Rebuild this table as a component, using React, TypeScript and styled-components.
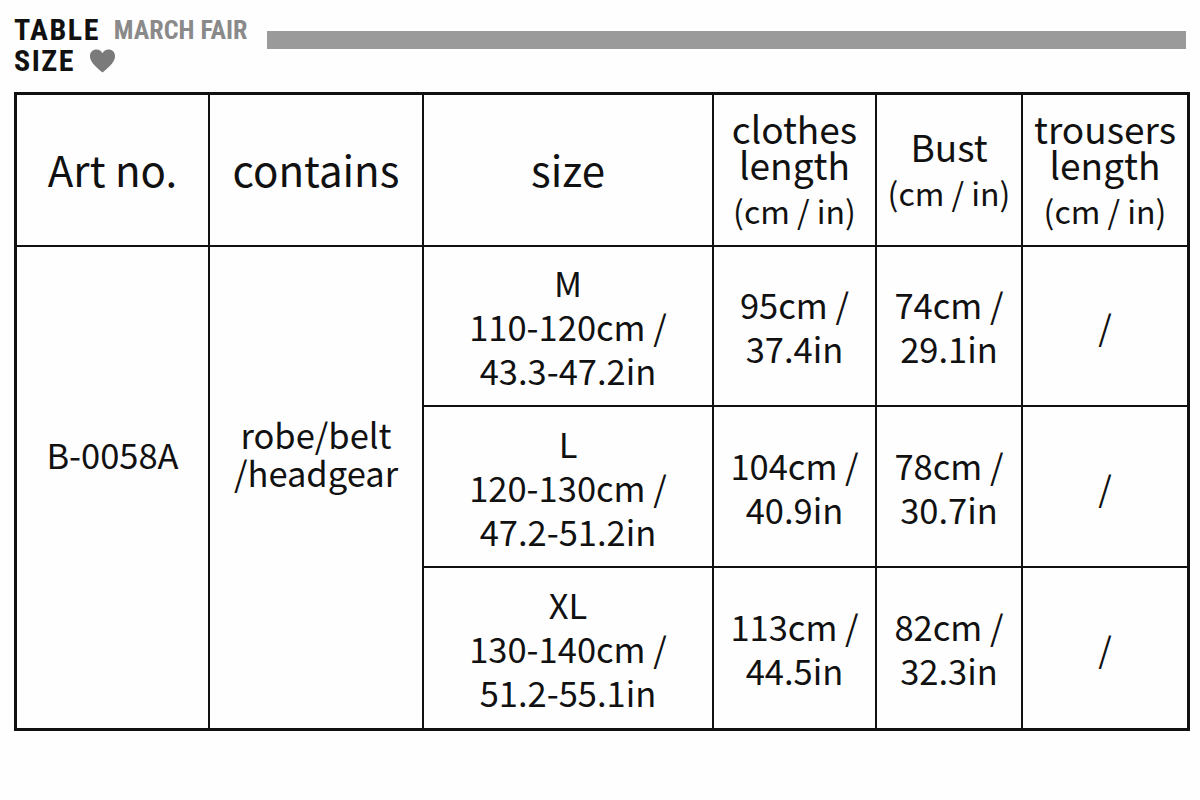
import React from "react"
import styled, { createGlobalStyle } from "styled-components"

const GlobalStyle = createGlobalStyle`
  html, body {
    margin: 0;
    padding: 0;
    background: #fff;
  }
  body {
    font-family: "Noto Sans CJK SC", "Noto Sans", sans-serif;
    color: #111;
  }
`

const Page = styled.div`
  width: 1200px;
  height: 800px;
  box-sizing: border-box;
  padding: 14px 14px 0 14px;
  background: #fefefe;
`

const Header = styled.div`
  display: flex;
  align-items: flex-start;
  gap: 20px;
  height: 78px;
`

const TitleBlock = styled.div`
  display: flex;
  flex-direction: column;
  font-family: "Roboto", sans-serif;
  font-weight: 700;
  font-stretch: 80%;
`

const TitleLine = styled.div`
  display: flex;
  align-items: center;
  gap: 14px;
  height: 31px;
`

const TitleWord = styled.span<{ $muted?: boolean }>`
  font-size: ${({ $muted }) => ($muted ? "26px" : "30px")};
  letter-spacing: ${({ $muted }) => ($muted ? "0" : "1.5px")};
  color: ${({ $muted }) => ($muted ? "#8a8a8a" : "#111")};
  line-height: 1;
`

const Bar = styled.div`
  flex: 1;
  height: 18px;
  margin-top: 17px;
  background: #9a9a9a;
`

const Table = styled.table`
  border-collapse: collapse;
  table-layout: fixed;
  width: 1172px;
  border: 3px solid #111;
  td, th {
    border: 2px solid #111;
    text-align: center;
    vertical-align: middle;
    padding: 0;
    font-weight: 400;
  }
`

const HeadCell = styled.th<{ $w: number }>`
  width: ${({ $w }) => $w}px;
  height: 150px;
`

const HeadMain = styled.div<{ $big?: boolean }>`
  font-size: ${({ $big }) => ($big ? "42px" : "37px")};
  line-height: ${({ $big }) => ($big ? "50px" : "36px")};
  padding-bottom: ${({ $big }) => ($big ? "2px" : "0")};
`

const HeadUnit = styled.div`
  font-size: 32px;
  line-height: 40px;
  margin-top: 8px;
`

const Cell = styled.td<{ $h?: number; $lift?: number; $lh?: number }>`
  height: ${({ $h }) => ($h ? `${$h}px` : "auto")};
  font-size: 34.5px;
  line-height: ${({ $lh }) => $lh ?? 44}px;
  && {
    padding-bottom: ${({ $lift }) => $lift ?? 0}px;
  }
`

const CellLine = styled.div`
  white-space: nowrap;
`

const Heart = () => (
  <svg width="27" height="24" viewBox="0 0 24 22">
    <path
      d="M12 21.5 C5 16 0.5 11.5 0.5 6.5 C0.5 3 3.2 0.5 6.5 0.5 C9 0.5 11 2 12 4 C13 2 15 0.5 17.5 0.5 C20.8 0.5 23.5 3 23.5 6.5 C23.5 11.5 19 16 12 21.5 Z"
      fill="#7a7a7a"
    />
  </svg>
)

type SizeRow = {
  size: string
  height: string
  heightIn: string
  clothes: string
  clothesIn: string
  bust: string
  bustIn: string
}

const rows: SizeRow[] = [
  { size: "M", height: "110-120cm /", heightIn: "43.3-47.2in", clothes: "95cm /", clothesIn: "37.4in", bust: "74cm /", bustIn: "29.1in" },
  { size: "L", height: "120-130cm /", heightIn: "47.2-51.2in", clothes: "104cm /", clothesIn: "40.9in", bust: "78cm /", bustIn: "30.7in" },
  { size: "XL", height: "130-140cm /", heightIn: "51.2-55.1in", clothes: "113cm /", clothesIn: "44.5in", bust: "82cm /", bustIn: "32.3in" },
]

const rowHeights = [158, 159, 160]

export default function App() {
  return (
    <Page>
      <GlobalStyle />
      <Header>
        <TitleBlock>
          <TitleLine>
            <TitleWord>TABLE</TitleWord>
            <TitleWord $muted>MARCH FAIR</TitleWord>
          </TitleLine>
          <TitleLine>
            <TitleWord>SIZE</TitleWord>
            <Heart />
          </TitleLine>
        </TitleBlock>
        <Bar />
      </Header>
      <Table>
        <thead>
          <tr>
            <HeadCell $w={191}><HeadMain $big>Art no.</HeadMain></HeadCell>
            <HeadCell $w={212}><HeadMain $big>contains</HeadMain></HeadCell>
            <HeadCell $w={288}><HeadMain $big>size</HeadMain></HeadCell>
            <HeadCell $w={161}>
              <HeadMain>clothes<br />length</HeadMain>
              <HeadUnit>(cm / in)</HeadUnit>
            </HeadCell>
            <HeadCell $w={144}>
              <HeadMain>Bust</HeadMain>
              <HeadUnit>(cm / in)</HeadUnit>
            </HeadCell>
            <HeadCell $w={164}>
              <HeadMain>trousers<br />length</HeadMain>
              <HeadUnit>(cm / in)</HeadUnit>
            </HeadCell>
          </tr>
        </thead>
        <tbody>
          {rows.map((r, i) => (
            <tr key={r.size}>
              {i === 0 && (
                <>
                  <Cell rowSpan={3} $lift={68}>B-0058A</Cell>
                  <Cell rowSpan={3} $lift={70} $lh={38}>
                    <CellLine>robe/belt</CellLine>
                    <CellLine>/headgear</CellLine>
                  </Cell>
                </>
              )}
              <Cell $h={rowHeights[i]}>
                <CellLine>{r.size}</CellLine>
                <CellLine>{r.height}</CellLine>
                <CellLine>{r.heightIn}</CellLine>
              </Cell>
              <Cell>
                <CellLine>{r.clothes}</CellLine>
                <CellLine>{r.clothesIn}</CellLine>
              </Cell>
              <Cell>
                <CellLine>{r.bust}</CellLine>
                <CellLine>{r.bustIn}</CellLine>
              </Cell>
              <Cell>/</Cell>
            </tr>
          ))}
        </tbody>
      </Table>
    </Page>
  )
}
